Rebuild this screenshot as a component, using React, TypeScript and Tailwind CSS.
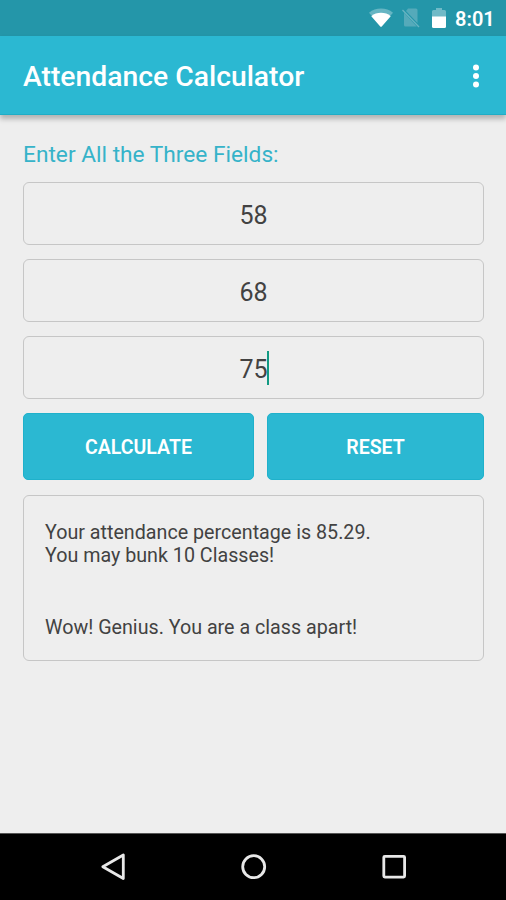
const FIELDS = [
  { id: 'attended', value: '58', focused: false },
  { id: 'total', value: '68', focused: false },
  { id: 'required', value: '75', focused: true },
]

function StatusBar() {
  return (
    <div className="flex h-9 shrink-0 items-center bg-[#2496a9] pl-[369px] text-white">
      {/* Wifi */}
      <svg width="24" height="20" viewBox="0 0 24 20" fill="currentColor">
        <path d="M12 18.5 0 4.8C3.4 2 7.5.6 12 .6s8.600 1.400 12 4.200z" opacity="0.3" />
        <path d="M13 18.200Q12 19.200 11 18.200L2.300 8.200C5 5.800 8.300 4.800 12 4.800s7 1 9.700 3.400z" />
      </svg>
      {/* No SIM */}
      <svg className="ml-[9px]" width="18" height="20" viewBox="0 0 18 20" fill="none">
        <path d="M6 .5H14Q15.500 .5 15.500 2V15L4 3Z" fill="#55aaba" />
        <path d="M2 4.800 14.800 18.500H3.500Q2 18.500 2 17Z" fill="#55aaba" />
        <path d="M.5 2 17 19" stroke="#68b4c2" strokeWidth="1.300" />
      </svg>
      {/* Battery */}
      <svg className="ml-3" width="14" height="22" viewBox="0 0 14 22" fill="currentColor">
        <path d="M4 1h6v2h2.500Q14 3 14 4.500V10H0V4.500Q0 3 1.500 3H4z" opacity="0.35" />
        <path d="M0 9.500h14v10q0 1.500-1.500 1.500h-11Q0 21 0 19.500z" />
      </svg>
      <span className="mt-0.5 ml-[9px] text-[20px] leading-none font-semibold">8:01</span>
    </div>
  )
}

function AppBar() {
  return (
    <header className="flex h-[79px] shrink-0 items-center justify-between border-b border-[#1fadc6] bg-[#2bb8d2] pr-[26px] pl-[23px] text-white shadow-[0_4px_5px_0_rgba(0,0,0,0.25)]">
      <h1 className="mt-[5px] text-[28.3px] leading-none font-medium whitespace-nowrap">Attendance Calculator</h1>
      <svg className="mt-px" width="8" height="24" viewBox="0 0 8 24" fill="currentColor">
        <circle cx="4" cy="3.500" r="3" />
        <circle cx="4" cy="12" r="3" />
        <circle cx="4" cy="20.500" r="3" />
      </svg>
    </header>
  )
}

function Field({ value, focused }: { value: string; focused: boolean }) {
  return (
    <div className="flex h-[63px] items-center justify-center rounded-md border border-[#c6c6c6] pt-[3px] text-[25px] leading-none text-[#424242]">
      <span className="relative">
        {value}
        {focused && <span className="absolute -top-[6px] -right-px h-[34px] w-[2px] bg-[#129a83]" />}
      </span>
    </div>
  )
}

function NavBar() {
  return (
    <nav className="flex h-[67px] shrink-0 items-center justify-between border-t border-[#555] bg-black pr-[98px] pl-[99px]">
      <svg width="28" height="30" viewBox="0 0 28 30" fill="none" stroke="#e8e8e8" strokeWidth="2.800">
        <path d="M24.300 3V26.500L3.800 14.800Z" strokeLinejoin="round" />
      </svg>
      <svg width="28" height="28" viewBox="0 0 28 28" fill="none" stroke="#e8e8e8" strokeWidth="2.800">
        <circle cx="13.700" cy="13.700" r="11" />
      </svg>
      <svg width="28" height="28" viewBox="0 0 28 28" fill="none" stroke="#e8e8e8" strokeWidth="2.800">
        <rect x="3.800" y="3.300" width="20.800" height="20.800" rx="1" />
      </svg>
    </nav>
  )
}

export default function App() {
  return (
    <div className="flex h-[900px] w-[506px] flex-col overflow-hidden bg-[#eeeeee] font-['Roboto',sans-serif]">
      <StatusBar />
      <AppBar />

      <main className="flex-1 pt-[26px] pr-[22px] pl-[23px]">
        <p className="mb-[14px] h-[27px] text-[22.7px] leading-[27px] whitespace-nowrap text-[#36b3c9]">
          Enter All the Three Fields:
        </p>

        {/* Inputs */}
        <div className="flex flex-col gap-[14px]">
          {FIELDS.map((field) => (
            <Field key={field.id} value={field.value} focused={field.focused} />
          ))}
        </div>

        {/* Actions */}
        <div className="mt-[14px] flex gap-[13px] text-[19.500px] font-semibold text-white">
          <button className="h-[67px] w-[231px] rounded-[5px] border border-[#1fb1cb] bg-[#2bb8d2] pt-[2px]">CALCULATE</button>
          <button className="h-[67px] flex-1 rounded-[5px] border border-[#1fb1cb] bg-[#2bb8d2] pt-[2px]">RESET</button>
        </div>

        {/* Result */}
        <div className="mt-[15px] h-[166px] rounded-md border border-[#c6c6c6] pt-[25px] pl-[21px] text-[19.7px] leading-[23px] whitespace-nowrap text-[#424242]">
          <p>Your attendance percentage is 85.29.</p>
          <p>You may bunk 10 Classes!</p>
          <p className="mt-[49px]">Wow! Genius. You are a class apart!</p>
        </div>
      </main>

      <NavBar />
    </div>
  )
}
